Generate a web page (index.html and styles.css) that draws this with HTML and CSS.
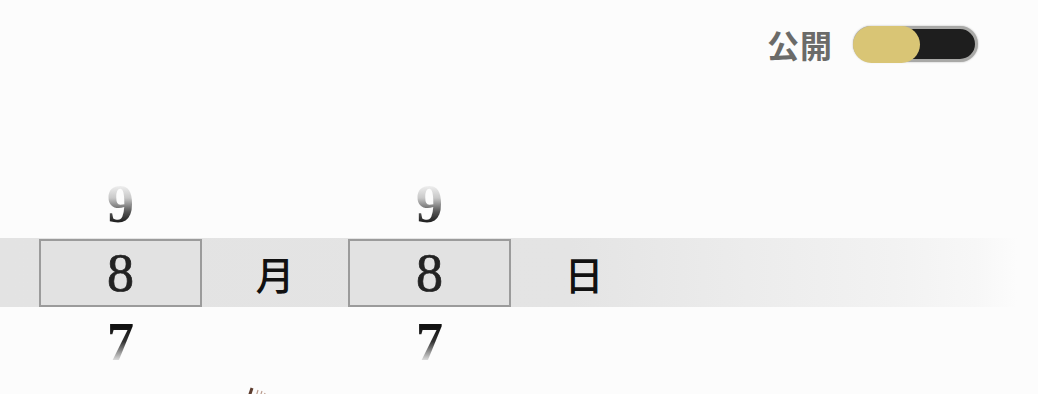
FILE: index.html
```html
<!doctype html>
<html lang="ja">
<head>
  <meta charset="utf-8">
  <title>日付選択</title>
  <link rel="stylesheet" href="styles.css">
</head>
<body>

<div class="topbar">
  <span class="public-label">公開</span>
  <div class="switch">
    <span class="switch-thumb"></span>
  </div>
</div>

<!-- Date wheel: month / day -->
<div class="picker">
  <div class="picker-row">
    <span class="cell cell-num fade-up">9</span>
    <span class="cell cell-unit"></span>
    <span class="cell cell-num fade-up">9</span>
    <span class="cell cell-unit"></span>
  </div>
  <div class="picker-row picker-row-current">
    <span class="cell cell-num cell-box">8</span>
    <span class="cell cell-unit">月</span>
    <span class="cell cell-num cell-box">8</span>
    <span class="cell cell-unit">日</span>
  </div>
  <div class="picker-row">
    <span class="cell cell-num fade-down">7</span>
    <span class="cell cell-unit"></span>
    <span class="cell cell-num fade-down">7</span>
    <span class="cell cell-unit"></span>
  </div>
</div>

<div class="deco">
  <svg width="30" height="16" viewBox="0 0 30 16">
    <path d="M3 16 L6 7" stroke="#5e3e30" stroke-width="3" fill="none"/>
    <path d="M10 16 L12 9 M14 16 L16 10 M18 16 L19 12" stroke="#b99a8c" stroke-width="1.2" fill="none"/>
  </svg>
</div>

</body>
</html>
```

FILE: styles.css
```css
html {
  background-color: #fcfcfc;
}

body {
  margin: 0;
  color: #222;
  font-family: "Liberation Serif", serif;
  overflow: hidden;
  height: 394px;
}

/* Public toggle in the top right corner */

.topbar {
  display: flex;
  justify-content: flex-end;
  align-items: center;
  gap: 20px;
  padding: 25px 60px 0 0;
  height: 38px;
}

.public-label {
  color: #6b6b69;
  font-family: "Noto Sans CJK JP", sans-serif;
  font-size: 32px;
  font-weight: 700;
  line-height: 1;
  letter-spacing: 1px;
}

.switch {
  display: flex;
  align-items: center;
  width: 119px;
  height: 30px;
  background-color: #1e1e1e;
  border: 3px solid #a9a9a7;
  border-radius: 20px;
  box-shadow: 0 0 2px rgba(0, 0, 0, 0.3);
}

.switch-thumb {
  width: 67px;
  height: 37px;
  margin-left: -3px;
  background-color: #d9c575;
  border-radius: 19px;
}

/* Wheel picker */

.picker {
  margin-top: 106px;
}

.picker-row {
  display: flex;
  height: 69px;
  padding-left: 39px;
}

.picker-row-current {
  background: linear-gradient(to right, #e3e3e3 0, #e4e4e4 55%, #ececec 72%, #f2f2f2 86%, #f7f7f7 94%, #fcfcfc 98%);
}

.cell {
  display: flex;
  align-items: center;
  justify-content: center;
  box-sizing: border-box;
}

.cell-num {
  width: 163px;
  font-size: 54px;
  line-height: 1;
  -webkit-text-stroke: 0.7px currentColor;
}

.cell-unit {
  width: 146px;
  font-family: "Noto Sans CJK JP", sans-serif;
  font-size: 39px;
  font-weight: 500;
  color: #111;
}

.cell-box {
  margin-top: 1px;
  height: 68px;
  border: 2px solid #9b9b9b;
  background-color: #e2e2e2;
  color: #222;
}

.fade-up,
.fade-down {
  -webkit-background-clip: text;
  background-clip: text;
  color: transparent;
  -webkit-text-stroke: 0;
  font-weight: 700;
}

.fade-up {
  background-image: linear-gradient(to bottom, #f4f4f4 22%, #c8c8c8 42%, #555 62%, #222 76%);
}

.fade-down {
  background-image: linear-gradient(to bottom, #111 30%, #333 50%, #999 66%, #fcfcfc 82%);
}

.deco {
  padding: 0 0 0 246px;
  margin-top: 5px;
}
```
